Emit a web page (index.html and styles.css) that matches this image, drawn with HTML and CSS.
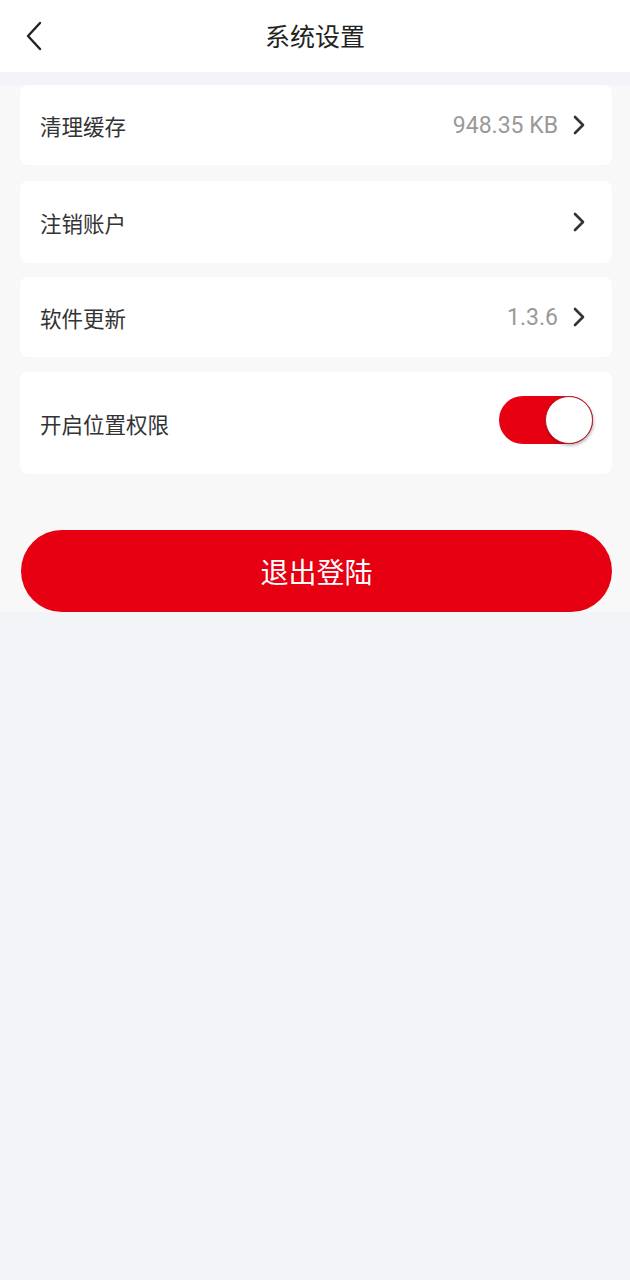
FILE: index.html
```html
<!DOCTYPE html>
<html lang="zh">
<head>
<meta charset="utf-8">
<link rel="stylesheet" href="styles.css">
</head>
<body>
<header class="topbar">
  <span class="back">
    <svg width="20" height="30" viewBox="0 0 20 30"><path d="M16 2 L4 15 L16 28" fill="none" stroke="#222" stroke-width="2.4" stroke-linecap="round" stroke-linejoin="round"/></svg>
  </span>
  <h1 class="title">系统设置</h1>
</header>
<div class="gap"></div>
<main class="content">
  <div class="card">
    <span class="label">清理缓存</span>
    <span class="right"><span class="value">948.35 KB</span><svg class="chev" width="14" height="22" viewBox="0 0 14 22"><path d="M3 3 L11 11 L3 19" fill="none" stroke="#333" stroke-width="2.6" stroke-linecap="round" stroke-linejoin="round"/></svg></span>
  </div>
  <div class="card">
    <span class="label">注销账户</span>
    <span class="right"><svg class="chev" width="14" height="22" viewBox="0 0 14 22"><path d="M3 3 L11 11 L3 19" fill="none" stroke="#333" stroke-width="2.6" stroke-linecap="round" stroke-linejoin="round"/></svg></span>
  </div>
  <div class="card">
    <span class="label">软件更新</span>
    <span class="right"><span class="value">1.3.6</span><svg class="chev" width="14" height="22" viewBox="0 0 14 22"><path d="M3 3 L11 11 L3 19" fill="none" stroke="#333" stroke-width="2.6" stroke-linecap="round" stroke-linejoin="round"/></svg></span>
  </div>
  <div class="card tall">
    <span class="label">开启位置权限</span>
    <span class="switch"><span class="knob"></span></span>
  </div>
  <button class="logout">退出登陆</button>
</main>
</body>
</html>
```
FILE: styles.css
```css
html, body {
  margin: 0;
  padding: 0;
}
body {
  background: #f3f4f8;
  font-family: "Noto Sans CJK SC", Roboto, "Noto Sans", sans-serif;
  color: #333;
  width: 630px;
  min-height: 1280px;
}
.topbar {
  height: 72px;
  background: #fff;
  display: flex;
  align-items: center;
  justify-content: center;
  position: relative;
}
.back {
  position: absolute;
  left: 24px;
  top: 21px;
  display: flex;
}
.title {
  margin: 0;
  font-size: 25px;
  font-weight: 400;
  color: #222;
  line-height: 1;
  margin-top: -2px;
}
.gap {
  height: 13px;
  background: #f2f4f7;
}
.content {
  background: #f8f8f8;
  padding: 0 18px 0 20px;
  display: flex;
  flex-direction: column;
}
.card {
  background: #fff;
  border-radius: 8px;
  height: 80px;
  margin-bottom: 16px;
  display: flex;
  align-items: center;
  justify-content: space-between;
  padding: 0 26px 0 20px;
}
.card:nth-child(2) { height: 82px; margin-bottom: 14px; }
.card:nth-child(3) { margin-bottom: 15px; height: 80px; }
.card.tall {
  height: 102px;
  margin-bottom: 56px;
  padding-right: 19px;
}
.label {
  font-size: 21.5px;
  color: #333;
}
.right {
  display: flex;
  align-items: center;
  gap: 14px;
}
.value {
  font-family: Roboto, "Noto Sans", sans-serif;
  font-size: 23px;
  color: #999;
}
.chev { display: block; }
.switch {
  width: 94px;
  height: 48px;
  border-radius: 24px;
  background: #e60012;
  display: flex;
  justify-content: flex-end;
  margin-bottom: 6px;
}
.knob {
  width: 48px;
  height: 48px;
  border-radius: 50%;
  background: #fff;
  border: 1px solid #b02030;
  box-sizing: border-box;
  box-shadow: 1px 2px 3px rgba(0,0,0,0.25);
}
.logout {
  margin-left: 1px;
  height: 82px;
  border: none;
  border-radius: 41px;
  background: #e60012;
  color: #fff;
  font-family: "Noto Sans CJK SC", sans-serif;
  font-size: 28px;
  padding: 0;
}
```
